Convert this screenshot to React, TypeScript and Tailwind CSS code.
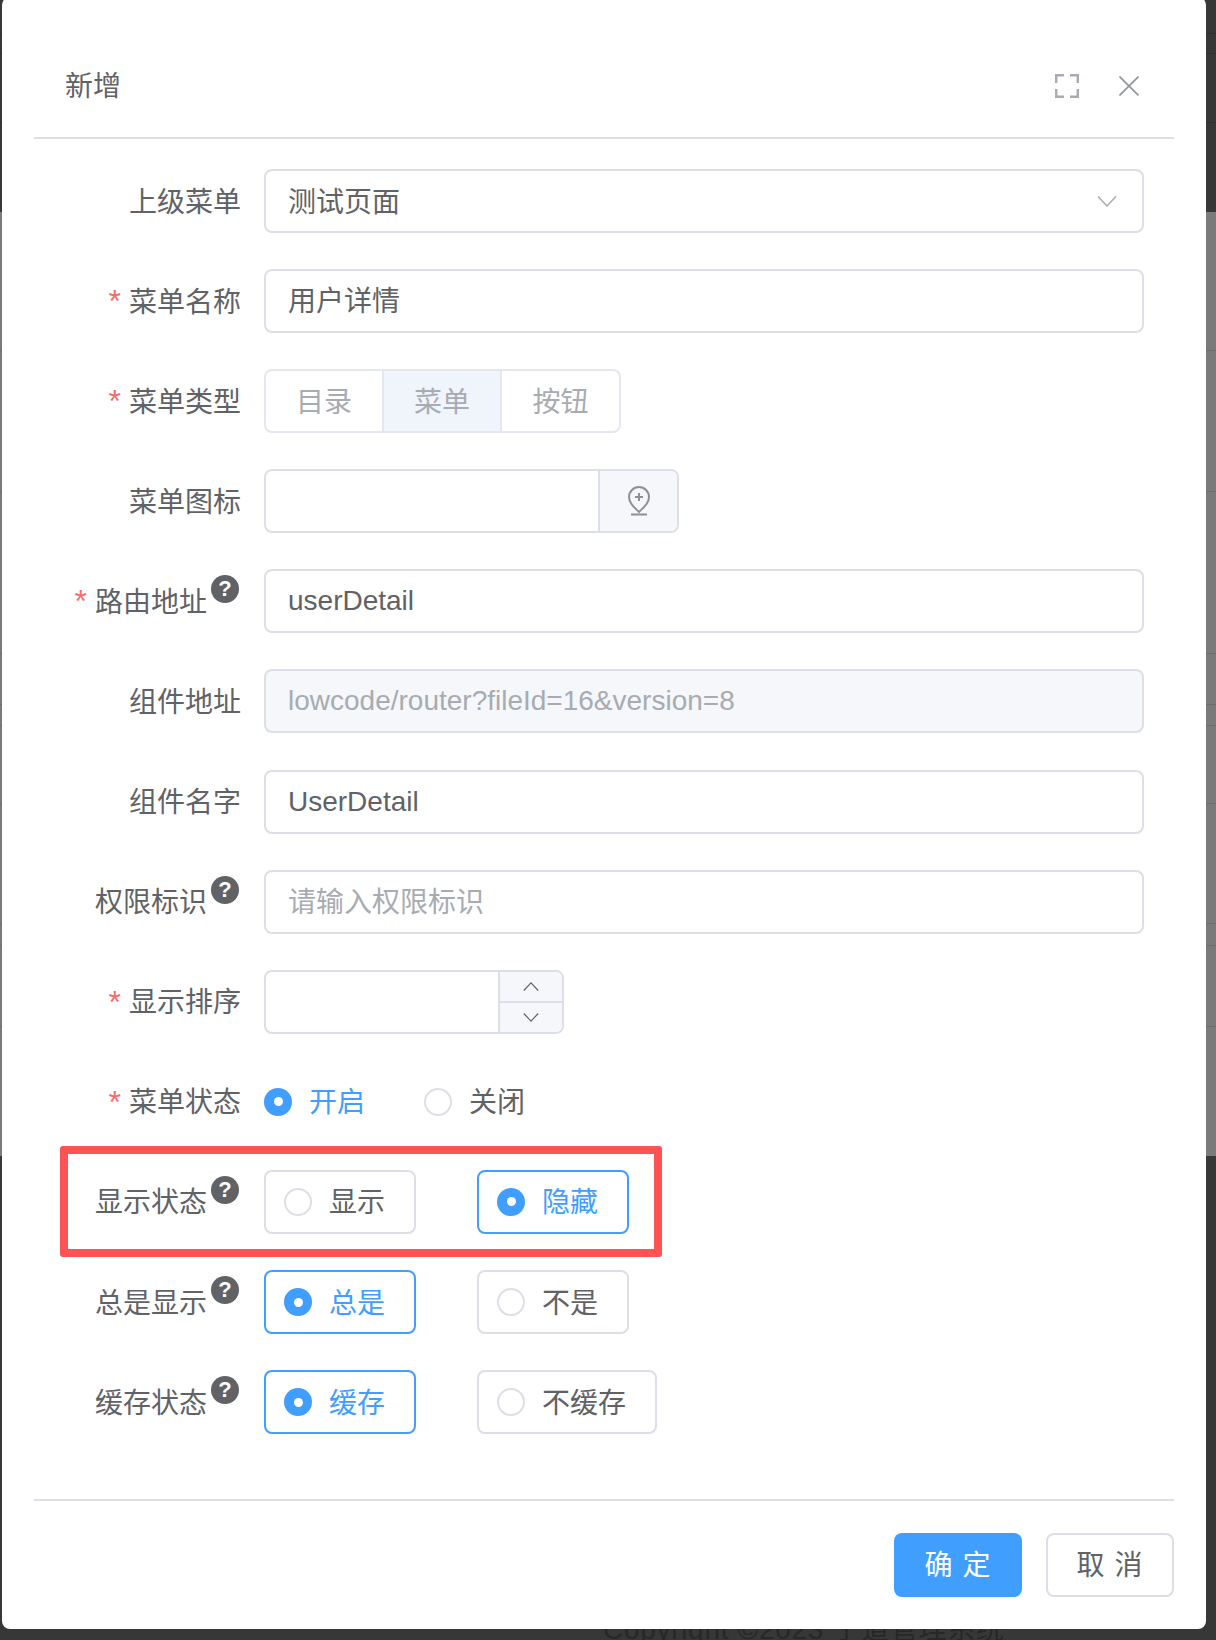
import React from "react";

const darkLines = ["h-[34px]", "h-[20px]", "h-[69px]", "h-[89px]"];
const greyLines = [
  "h-[139px]",
  "h-[141px]",
  "h-[162px]",
  "h-[51px]",
  "h-[21px]",
  "h-[78px]",
  "h-[120px]",
  "h-[22px]",
  "h-[81px]",
  "h-[129px]",
];

function Backdrop() {
  return (
    <div className="absolute inset-0 flex flex-col overflow-hidden bg-[#373737]">
      {darkLines.map((h, i) => (
        <div key={i} className={`${h} shrink-0 ${i < 3 ? "border-b border-[#2f2f2f]" : ""}`} />
      ))}
      <div className="flex h-[944px] shrink-0 flex-col bg-[#7a7a7a]">
        {greyLines.map((h, i) => (
          <div key={i} className={`${h} shrink-0 ${i < 9 ? "border-b border-[#6d6d6d]" : ""}`} />
        ))}
      </div>
      <div className="flex flex-1 items-end pl-[603px]">
        <span className="mb-[-9px] whitespace-nowrap leading-[38px] tracking-[0.7px] text-[#272727]">
          Copyright ©2023 宁道管理系统
        </span>
      </div>
    </div>
  );
}

function Help() {
  return (
    <span className="mt-[6px] mr-[2px] ml-[4px] flex h-[28px] w-[28px] shrink-0 items-center justify-center self-start rounded-full bg-[#606266] text-[22px] font-bold leading-none text-white">
      ?
    </span>
  );
}

function Row({
  label,
  required,
  help,
  children,
}: {
  label: string;
  required?: boolean;
  help?: boolean;
  children: React.ReactNode;
}) {
  return (
    <div className="flex h-[64px] items-center pr-[30px]">
      <div className="flex h-full w-[207px] shrink-0 items-center justify-end">
        {required && <span className="mr-[8px] text-[32px] leading-none text-[#f56c6c]">*</span>}
        <span className="whitespace-nowrap pt-[3px] text-[#606266]">{label}</span>
        {help && <Help />}
      </div>
      <div className="ml-[23px] flex min-w-0 flex-1 items-center">{children}</div>
    </div>
  );
}

function TextBox({
  value,
  placeholder,
  disabled,
  cjk,
}: {
  value?: string;
  placeholder?: string;
  disabled?: boolean;
  cjk?: boolean;
}) {
  return (
    <div
      className={`flex h-[64px] w-full items-center rounded-[8px] border-2 border-[#dcdfe6] pl-[22px] ${
        disabled ? "bg-[#f5f7fa] text-[#a8abb2]" : "bg-white text-[#606266]"
      }`}
    >
      {placeholder ? (
        <span className="pt-[2px] text-[#a8abb2]">{placeholder}</span>
      ) : (
        <span className={cjk ? "pt-[2px]" : ""}>{value}</span>
      )}
    </div>
  );
}

function Dot({ checked }: { checked?: boolean }) {
  return checked ? (
    <span className="flex h-[28px] w-[28px] shrink-0 items-center justify-center rounded-full bg-[#409eff]">
      <span className="h-[9px] w-[9px] rounded-full bg-white" />
    </span>
  ) : (
    <span className="h-[28px] w-[28px] shrink-0 rounded-full border-2 border-[#dcdfe6] bg-white" />
  );
}

function PlainRadio({ label, checked }: { label: string; checked?: boolean }) {
  return (
    <div className={`flex items-center gap-[17px] ${checked ? "text-[#409eff]" : "text-[#606266]"}`}>
      <Dot checked={checked} />
      <span className="pt-[2px]">{label}</span>
    </div>
  );
}

function BoxRadio({ label, checked }: { label: string; checked?: boolean }) {
  return (
    <div
      className={`flex h-[64px] items-center gap-[17px] rounded-[8px] border-2 pr-[29px] pl-[18px] ${
        checked ? "border-[#409eff] text-[#409eff]" : "border-[#dcdfe6] text-[#606266]"
      }`}
    >
      <Dot checked={checked} />
      <span className="whitespace-nowrap pt-[3px]">{label}</span>
    </div>
  );
}

function BoxPair({ left, right, first }: { left: string; right: string; first?: boolean }) {
  return (
    <div className="flex gap-[61px]">
      <BoxRadio label={left} checked={first} />
      <BoxRadio label={right} checked={!first} />
    </div>
  );
}

function Chevron({ up, className }: { up?: boolean; className: string }) {
  return (
    <svg viewBox="0 0 20 11" fill="none" stroke="currentColor" strokeWidth="1.5" className={className}>
      <path d={up ? "M1 10.5 10 1l9 9.5" : "M1 .5 10 10l9-9.5"} />
    </svg>
  );
}

export default function App() {
  return (
    <div className="relative h-[1640px] w-full overflow-hidden text-[28px] [font-family:'Liberation_Sans','Noto_Sans_CJK_SC',sans-serif]">
      <Backdrop />

      <div className="absolute top-[-3px] left-[2px] flex h-[1632px] w-[1204px] flex-col rounded-[8px] bg-white px-[32px]">
        <div className="flex h-[142px] shrink-0 items-center border-b-2 border-[#dcdfe6] pt-[37px]">
          <span className="ml-[31px] pt-[2px] text-[#606266]">新增</span>
          <svg
            viewBox="0 0 24 24"
            fill="none"
            stroke="#a8abb2"
            strokeWidth="2.4"
            className="ml-auto h-[24px] w-[24px]"
          >
            <path d="M1.2 9V1.2H9M15 1.2h7.800V9M22.800 15v7.800H15M9 22.800H1.200V15" />
          </svg>
          <svg
            viewBox="0 0 20 20"
            fill="none"
            stroke="#909399"
            strokeWidth="1.6"
            className="mr-[35px] ml-[40px] h-[20px] w-[20px]"
          >
            <path d="M.5.5l19 19M19.500.5l-19 19" />
          </svg>
        </div>

        <div className="flex flex-col gap-[36.1px] pt-[30px]">
          <Row label="上级菜单">
            <div className="flex h-[64px] w-full items-center justify-between rounded-[8px] border-2 border-[#dcdfe6] pr-[25px] pl-[22px] text-[#606266]">
              <span className="pt-[3px]">测试页面</span>
              <Chevron className="h-[11px] w-[20px] text-[#a8abb2]" />
            </div>
          </Row>
          <Row label="菜单名称" required>
            <TextBox value="用户详情" cjk />
          </Row>
          <Row label="菜单类型" required>
            <div className="flex h-[64px] w-[357px] rounded-[8px] border-2 border-[#e4e7ed] pt-0 text-[#a8abb2]">
              <div className="flex w-[116px] items-center justify-center pt-[3px]">目录</div>
              <div className="flex w-[120px] items-center justify-center border-x-2 border-[#e4e7ed] bg-[#f0f4fb] pt-[3px]">
                菜单
              </div>
              <div className="flex flex-1 items-center justify-center pt-[3px]">按钮</div>
            </div>
          </Row>
          <Row label="菜单图标">
            <div className="flex h-[64px] w-[415px] rounded-[8px] border-2 border-[#dcdfe6]">
              <div className="flex-1" />
              <div className="flex w-[79px] items-center justify-center rounded-r-[6px] border-l-2 border-[#dcdfe6] bg-[#f5f7fa]">
                <svg viewBox="0 0 24 30" fill="none" stroke="#8f9095" strokeWidth="2" className="h-[30px] w-[24px]">
                  <path d="M12 26C7 21 2 17 2 11a10 10 0 0 1 20 0c0 6-5 10-10 15Z" />
                  <path d="M4 28.500h16M12 7v8M8 11h8" />
                </svg>
              </div>
            </div>
          </Row>
          <Row label="路由地址" required help>
            <TextBox value="userDetail" />
          </Row>
          <Row label="组件地址">
            <TextBox value="lowcode/router?fileId=16&version=8" disabled />
          </Row>
          <Row label="组件名字">
            <TextBox value="UserDetail" />
          </Row>
          <Row label="权限标识" help>
            <TextBox placeholder="请输入权限标识" />
          </Row>
          <Row label="显示排序" required>
            <div className="flex h-[64px] w-[300px] rounded-[8px] border-2 border-[#dcdfe6]">
              <div className="flex-1" />
              <div className="flex w-[64px] flex-col rounded-r-[6px] border-l-2 border-[#dcdfe6] bg-[#f5f7fa] text-[#606266]">
                <div className="flex flex-1 items-center justify-center border-b-2 border-[#dcdfe6]">
                  <Chevron up className="h-[9px] w-[16px]" />
                </div>
                <div className="flex flex-1 items-center justify-center">
                  <Chevron className="h-[9px] w-[16px]" />
                </div>
              </div>
            </div>
          </Row>
          <Row label="菜单状态" required>
            <div className="flex gap-[59px]">
              <PlainRadio label="开启" checked />
              <PlainRadio label="关闭" />
            </div>
          </Row>
          <Row label="显示状态" help>
            <BoxPair left="显示" right="隐藏" />
          </Row>
          <Row label="总是显示" help>
            <BoxPair left="总是" right="不是" first />
          </Row>
          <Row label="缓存状态" help>
            <BoxPair left="缓存" right="不缓存" first />
          </Row>
        </div>

        <div className="mt-auto flex h-[130px] shrink-0 justify-end gap-[24px] border-t-2 border-[#dcdfe6] pt-[32px]">
          <button className="h-[64px] w-[128px] rounded-[8px] bg-[#409eff] pt-[2px] tracking-[1px] text-white">确 定</button>
          <button className="h-[64px] w-[128px] rounded-[8px] border-2 border-[#dcdfe6] bg-white pt-[2px] tracking-[1px] text-[#606266]">
            取 消
          </button>
        </div>
      </div>

      {/* annotation drawn over the screenshot */}
      <div className="absolute top-[1146px] left-[60px] h-[111px] w-[602px] rounded-[3px] border-[8px] border-[#ff5252]" />
    </div>
  );
}
